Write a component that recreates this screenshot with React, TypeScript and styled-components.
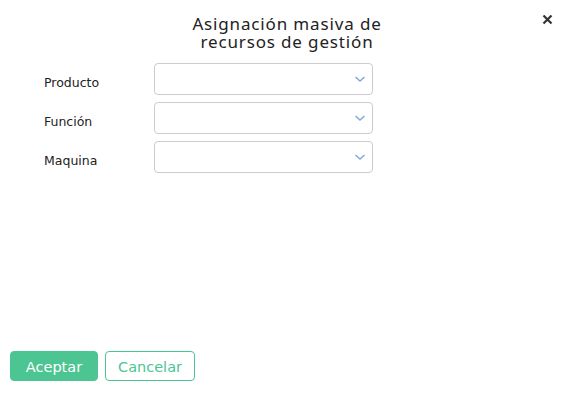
import React from "react";
import styled, { createGlobalStyle } from "styled-components";

const GlobalStyle = createGlobalStyle`
  html, body {
    margin: 0;
    padding: 0;
    background: #ffffff;
  }
  * {
    box-sizing: border-box;
  }
`;

const Dialog = styled.div`
  position: relative;
  width: 570px;
  height: 402px;
  background: #ffffff;
  display: flex;
  flex-direction: column;
`;

const Header = styled.div`
  display: flex;
  justify-content: center;
  padding: 15px 0 0 4px;
  height: 63px;
`;

const Title = styled.h2`
  margin: 0;
  font-family: "Noto Sans", "Open Sans", sans-serif;
  font-weight: 400;
  font-size: 17px;
  line-height: 18px;
  letter-spacing: 0.85px;
  color: #222;
  text-align: center;
`;

const CloseButton = styled.button`
  position: absolute;
  top: 11px;
  right: 15px;
  width: 16px;
  height: 16px;
  padding: 0;
  border: none;
  background: none;
  cursor: pointer;
  display: flex;
  align-items: center;
  justify-content: center;
`;

const Form = styled.div`
  display: flex;
  flex-direction: column;
  gap: 7px;
  padding-left: 44px;
  flex: 1;
`;

const Row = styled.div`
  display: flex;
  align-items: center;
`;

const Label = styled.label`
  width: 110px;
  font-family: "DejaVu Sans", Verdana, sans-serif;
  font-size: 12.5px;
  color: #222;
  padding-top: 7px;
`;

const SelectBox = styled.div`
  width: 219px;
  height: 32px;
  border: 1px solid #cccccc;
  border-radius: 4px;
  display: flex;
  align-items: center;
  justify-content: flex-end;
  padding-right: 6px;
`;

const Footer = styled.div`
  display: flex;
  gap: 7px;
  padding: 0 0 21px 10px;
`;

const Button = styled.button<{ $primary?: boolean }>`
  height: 30px;
  padding: 0;
  width: ${({ $primary }) => ($primary ? "88px" : "90px")};
  border-radius: 4px;
  border: 1px solid #4cc592;
  background: ${({ $primary }) => ($primary ? "#4cc592" : "#ffffff")};
  color: ${({ $primary }) => ($primary ? "#ffffff" : "#4cc592")};
  font-family: "DejaVu Sans", Verdana, sans-serif;
  font-size: 14.5px;
  cursor: pointer;
  padding-top: 2px;
`;

const Chevron = () => (
  <svg width="12" height="8" viewBox="0 0 12 8">
    <path d="M1.5 2 L6 6 L10.5 2" fill="none" stroke="#7fa6d8" strokeWidth="1.4" />
  </svg>
);

const fields = ["Producto", "Función", "Maquina"];

export default function App() {
  return (
    <>
      <GlobalStyle />
      <Dialog>
        <Header>
          <Title>
            Asignación masiva de
            <br />
            recursos de gestión
          </Title>
        </Header>
        <CloseButton aria-label="Cerrar">
          <svg width="11" height="11" viewBox="0 0 11 11">
            <path d="M1.5 1.5 L9.5 9.5 M9.5 1.5 L1.5 9.5" stroke="#333" strokeWidth="2.2" />
          </svg>
        </CloseButton>
        <Form>
          {fields.map((f) => (
            <Row key={f}>
              <Label>{f}</Label>
              <SelectBox>
                <Chevron />
              </SelectBox>
            </Row>
          ))}
        </Form>
        <Footer>
          <Button $primary>Aceptar</Button>
          <Button>Cancelar</Button>
        </Footer>
      </Dialog>
    </>
  );
}
